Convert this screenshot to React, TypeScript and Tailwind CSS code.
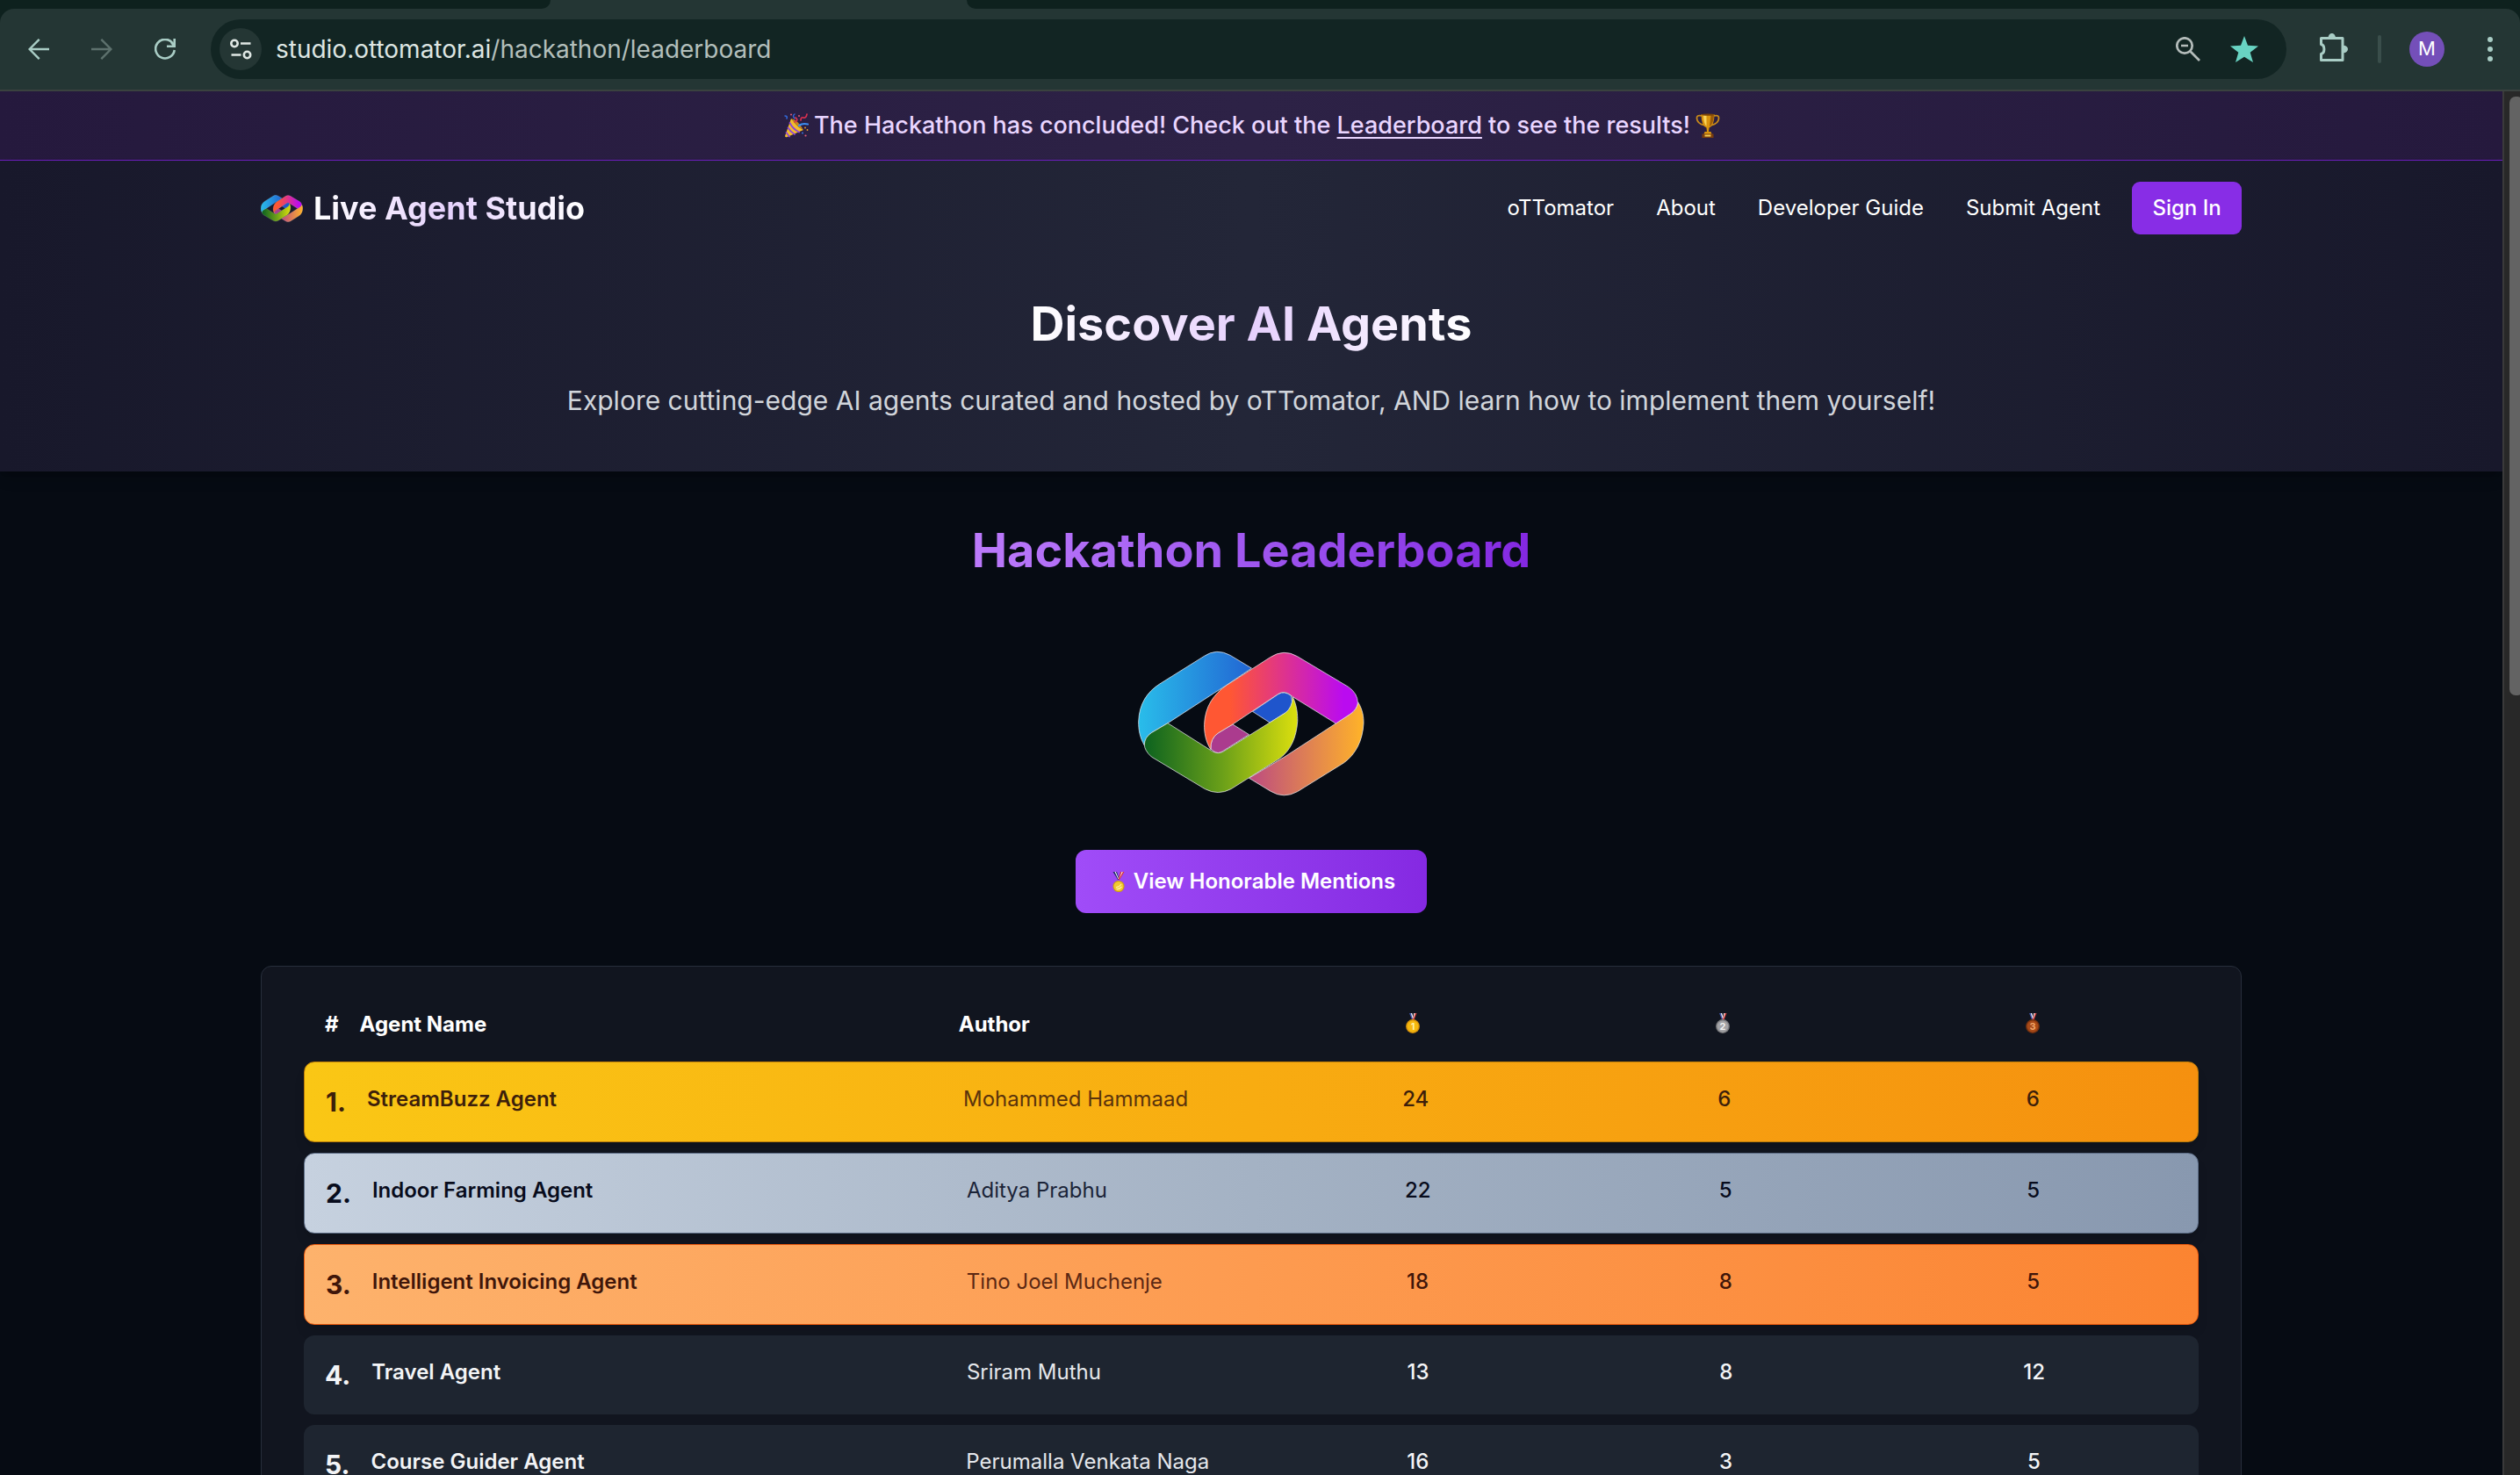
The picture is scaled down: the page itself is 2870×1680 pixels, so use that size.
import React, { useId } from "react";

function Logo({ className }: { className: string }) {
  const id = useId().replace(/[^a-zA-Z0-9]/g, "");
  const grad = (n: string) => `url(#${id}${n})`;
  return (
    <svg viewBox="76 64 775 498" className={className} stroke="#e5e7eb" strokeOpacity="0.75" strokeWidth="3" strokeLinejoin="round">
      <defs>
        <linearGradient id={`${id}b`} gradientUnits="userSpaceOnUse" x1="78" y1="0" x2="465" y2="0">
          <stop offset="0" stopColor="#29bdea" />
          <stop offset="1" stopColor="#2265d3" />
        </linearGradient>
        <linearGradient id={`${id}p`} gradientUnits="userSpaceOnUse" x1="390" y1="0" x2="780" y2="0">
          <stop offset="0" stopColor="#ff5733" />
          <stop offset="1" stopColor="#ba0bf0" />
        </linearGradient>
        <linearGradient id={`${id}y`} gradientUnits="userSpaceOnUse" x1="460" y1="0" x2="840" y2="0">
          <stop offset="0" stopColor="#bd4c80" />
          <stop offset="1" stopColor="#feb12a" />
        </linearGradient>
        <linearGradient id={`${id}g`} gradientUnits="userSpaceOnUse" x1="110" y1="0" x2="620" y2="0">
          <stop offset="0" stopColor="#10651f" />
          <stop offset="0.5" stopColor="#6ba019" />
          <stop offset="1" stopColor="#dbdf0e" />
        </linearGradient>
      </defs>
      <path fill={grad("b")} d="M98 388C82 360 78 335 78 307C80 245 108 205 150 178L302 83Q345 54 392 80L465 124L376 184L335 210L178 312L124 344Q100 360 98 388Z" />
      <path fill={grad("y")} d="M829 240C846 268 848 292 848 312C845 372 820 420 780 448L622 546Q575 572 530 545L456 500L578 427L753 313L802 281Q827 263 829 240Z" />
      <path fill="#ab3b8e" d="M325 400Q322 366 350 346L400 316L456 351L366 408Q350 419 335 408Z" />
      <path fill="#1f55cc" d="M468 272L556 213Q575 200 600 218L604 240Q602 262 580 277L527 310Z" />
      <path fill={grad("p")} d="M325 402C306 372 303 342 303 318C305 255 335 212 380 182L528 87Q575 56 622 84L796 188Q828 210 828 243Q825 265 802 281L753 313L606 222Q578 196 556 212L400 316L350 346Q323 364 325 402Z" />
      <path fill={grad("g")} d="M605 222C621 252 622 285 622 305C618 360 600 403 562 432L395 537Q350 561 305 537L122 427Q98 405 98 385Q99 360 122 345L178 312L330 408Q350 420 370 408L527 310L580 277Q605 258 605 222Z" />
    </svg>
  );
}

function Party({ className }: { className: string }) {
  return (
    <svg viewBox="0 0 28 28" className={className} fill="none" strokeLinecap="round">
      <path d="M8 6L1 26Q1.500 28 3.500 27L22 19Q17 17 13 12T8 6Z" fill="#f2bc2b" />
      <path d="M6.500 11Q10 18 17 21.500M4.500 16.500Q7 21 12 24M2.500 22L6 26.500" stroke="#8b45d8" strokeWidth="1.800" />
      <path d="M8 6Q15 7 22 19Q17 17 13 12T8 6Z" fill="#c9851c" />
      <path d="M1 3Q4 3 3 6M12 6Q9 3 12 1" stroke="#3268d8" strokeWidth="1.500" />
      <path d="M17 14Q21 11 27 12.500" stroke="#3b8cf0" strokeWidth="2.200" />
      <path d="M12 10Q17 8 13 5M19 8Q19 4 22 5T26 1" stroke="#d9304f" strokeWidth="1.700" />
      <g fill="#e05a78">
        <circle cx="8" cy="1.500" r="1" />
        <circle cx="17" cy="3" r="1" />
        <circle cx="24.500" cy="25.500" r="1.100" />
        <circle cx="26.500" cy="19" r="0.900" fill="#f0a030" />
        <circle cx="21" cy="22.500" r="0.900" fill="#3b7cf0" />
        <circle cx="24" cy="16.500" r="0.900" fill="#f0a030" />
      </g>
    </svg>
  );
}

function Trophy({ className }: { className: string }) {
  return (
    <svg viewBox="0 0 28 28" className={className} fill="none">
      <path d="M7 3Q1 1.500 1.500 6Q2 12 10 13.500M21 3Q27 1.500 26.500 6Q26 12 18 13.500" stroke="#c98a1a" strokeWidth="1.800" />
      <path d="M6.500 1H21.500Q21.500 14 15.500 16.500L15 21H13L12.500 16.500Q6.500 14 6.500 1Z" fill="#d9940f" />
      <path d="M9 2H12.500V15Q9 11 9 2Z" fill="#f8d35a" />
      <path d="M17.500 2H21Q20.500 12 16 15.500Z" fill="#9a5a08" />
      <ellipse cx="14" cy="1.600" rx="7.500" ry="1.200" fill="#7c4508" />
      <path d="M10.500 21H17.500L18.500 24H9.500Z" fill="#d9940f" />
      <path d="M7.500 23.500H20.500V28H7.500Z" fill="#7a3d0c" />
      <path d="M10.500 24.500H17.500V26.500H10.500Z" fill="#f5cf55" />
    </svg>
  );
}

function Medal({ rim, face, digit, n, className }: { rim: string; face: string; digit: string; n: number; className: string }) {
  return (
    <svg viewBox="0 0 16 23" className={className}>
      {n === 0 ? (
        <>
          <path d="M1.500 0H6L9 9H7Z" fill="#1d2a63" />
          <path d="M14.500 0H10L7.500 9H9Z" fill="#d8333a" />
          <path d="M3.500 0H4.800L8.200 8H7.300ZM11.500 0H12.800L8.700 8Z" fill="#f4f4f8" />
          <circle cx="8" cy="16.500" r="6.600" fill={rim} />
          <circle cx="8" cy="16.500" r="5.500" fill={face} />
          <path d="M5 17.500Q8 18 11 14M5.500 19.500Q9 20 11.500 17" stroke={digit} strokeWidth="1.200" fill="none" />
        </>
      ) : (
        <>
          <path d="M4 0H7L9 7.500H7Z" fill="#3d55a8" />
          <path d="M12.500 0H9.500L7.500 7.500H9.500Z" fill="#d8433f" />
          <path d="M5.800 0H7.200L8.800 5.500H7.600ZM9.200 0H10.600L8.800 6Z" fill="#f4f4f8" />
          <circle cx="8" cy="15" r="7.900" fill={rim} />
          <circle cx="8" cy="15" r="6.400" fill={face} />
          <text x="8" y="19" textAnchor="middle" fontSize="11" fontWeight="700" fontFamily="Inter, sans-serif" fill={digit}>
            {n}
          </text>
        </>
      )}
    </svg>
  );
}

function BrowserBar() {
  return (
    <div className="flex h-[104px] flex-col bg-[#0e211e]">
      <div className="flex h-[10px] shrink-0 pl-[627px]">
        <div className="-ml-3 h-[10px] w-3 bg-[#243634]">
          <div className="h-full w-full rounded-br-[10px] bg-[#0e211e]" />
        </div>
        <div className="h-[10px] w-[474px] bg-[#243634]" />
        <div className="h-[10px] w-3 bg-[#243634]">
          <div className="h-full w-full rounded-bl-[10px] bg-[#0e211e]" />
        </div>
      </div>
      <div className="flex h-[94px] items-center rounded-t-[16px] border-b-2 border-[#3a423f] bg-[#243634]">
        <svg viewBox="0 0 24 24" className="ml-8 size-6" fill="none" stroke="#a9cdc5" strokeWidth="2.400">
          <path d="M24 12H2M12.700 0.800L1.600 12L12.700 23.200" />
        </svg>
        <svg viewBox="0 0 24 24" className="ml-12 size-6" fill="none" stroke="#5d716d" strokeWidth="2.400">
          <path d="M0 12H22M11.300 0.800L22.400 12L11.300 23.200" />
        </svg>
        <svg viewBox="0 0 24 24" className="ml-12 size-6" fill="none" stroke="#a9cdc5" strokeWidth="2.600">
          <path d="M20.500 5A10.800 10.800 0 1 0 22.700 13M14 8.700H22.700V0M22.700 8.700L19 4" />
        </svg>
        <div className="ml-10 flex h-[68px] w-[2364px] items-center rounded-full bg-[#122523] pl-[10px]">
          <div className="flex size-12 items-center justify-center rounded-full bg-[#243634]">
            <svg viewBox="0 0 26 24" className="h-6 w-[26px]" fill="none" stroke="#dfe7e4" strokeWidth="2.600">
              <circle cx="6" cy="5.500" r="3.700" />
              <circle cx="20.500" cy="18.500" r="3.700" />
              <path d="M13 5.500H24.500M2.500 18.500H13.500" />
            </svg>
          </div>
          <div className="ml-4 w-[563px] whitespace-nowrap font-['Inter'] text-[28px] leading-[34px] tracking-[-0.010px] text-[#b3bfbb]">
            <span className="text-[#dde5e2]">studio.ottomator.ai</span>/hackathon/leaderboard
          </div>
          <svg viewBox="0 0 28 28" className="ml-auto mr-[34px] size-7" fill="none" stroke="#b4bcba" strokeWidth="2.700">
            <circle cx="10" cy="10" r="8.700" />
            <path d="M16.300 16.300L27 27M6 10H14" />
          </svg>
          <svg viewBox="0 0 32 30" className="mr-8 h-[30px] w-8" fill="#68d3c2">
            <path d="M16 0L20 10.800L32 11.400L22.700 18.800L26 30L16 23.700L6 30L9.300 18.800L0 11.400L12 10.800Z" />
          </svg>
        </div>
        <svg viewBox="0 0 33 32" className="-mt-1 ml-[37px] h-8 w-[33px]" fill="none" stroke="#a9cdc5" strokeWidth="3" strokeLinejoin="round">
          <path d="M2.500 5.500H27V30.500H2.500V23.500A4.200 5.600 0 0 0 2.500 12.500Z" />
          <path d="M10.500 5A4.200 5 0 0 1 19 5ZM28 13.800A5 4.200 0 0 1 28 22.200Z" fill="#a9cdc5" stroke="none" />
        </svg>
        <div className="ml-[34px] h-8 w-1 rounded-full bg-[#3a4e4b]" />
        <div className="ml-8 flex size-10 items-center justify-center rounded-full bg-[#744fb9] font-['Inter'] text-[22px] text-white">M</div>
        <div className="ml-[49px] flex flex-col gap-[5px]">
          <div className="size-1.5 rounded-full bg-[#a9cdc5]" />
          <div className="size-1.5 rounded-full bg-[#a9cdc5]" />
          <div className="size-1.5 rounded-full bg-[#a9cdc5]" />
        </div>
      </div>
    </div>
  );
}

const medals = [
  { n: 1, rim: "#d9940c", face: "#f6b80f", digit: "#fff0a8" },
  { n: 2, rim: "#7d7d80", face: "#a3a3a6", digit: "#f1f1f1" },
  { n: 3, rim: "#7a3310", face: "#a84a18", digit: "#f0a468" },
];

const rows = [
  {
    name: "StreamBuzz Agent",
    author: "Mohammed Hammaad",
    scores: [24, 6, 6],
    row: "h-[92px] border border-[#b97a08] bg-linear-to-r from-[#fac715] via-[#f8ac11] to-[#f5900f] text-[#3d1f0b] shadow-lg shadow-black/10",
    sub: "text-[#5a330c]",
  },
  {
    name: "Indoor Farming Agent",
    author: "Aditya Prabhu",
    scores: [22, 5, 5],
    row: "h-[92px] border border-[#5d6d86] bg-linear-to-r from-[#c6d1df] via-[#a4b2c4] to-[#8898af] text-[#080c1c] shadow-lg shadow-black/10",
    sub: "text-[#1b2438]",
  },
  {
    name: "Intelligent Invoicing Agent",
    author: "Tino Joel Muchenje",
    scores: [18, 8, 5],
    row: "h-[92px] border border-[#ea580c] bg-linear-to-r from-[#fdb26c] via-[#fd9b50] to-[#fb8431] text-[#3f160a] shadow-lg shadow-black/10",
    sub: "text-[#5b2813]",
  },
  {
    name: "Travel Agent",
    author: "Sriram Muthu",
    scores: [13, 8, 12],
    row: "h-[90px] bg-[#1e2530] text-[#f3f4f6]",
    sub: "text-[#e5e7eb]",
  },
  {
    name: "Course Guider Agent",
    author: "Perumalla Venkata Naga",
    scores: [16, 3, 5],
    row: "h-[90px] bg-[#1e2530] text-[#f3f4f6]",
    sub: "text-[#e5e7eb]",
  },
];

export default function App() {
  return (
    <div className="h-[1680px] w-[2870px] overflow-hidden bg-[#060b13] font-['Inter',sans-serif] text-2xl text-white">
      <BrowserBar />
      <div className="flex h-[1576px]">
        <div className="h-full w-[2850px] overflow-hidden">
          <div className="flex h-[79px] items-center justify-center border-b border-[#6c1fbd] bg-linear-to-r from-[#25193d] via-[#2d2246] to-[#25193d] pl-[2px] text-[27px] font-medium leading-[42px] text-[#e9d5ff]">
            <Party className="mr-[6px] size-7" />
            <span className="whitespace-nowrap">
              The Hackathon has concluded! Check out the{" "}
              <span className="underline decoration-2 underline-offset-[4px]">Leaderboard</span> to see the results!
            </span>
            <Trophy className="ml-[6px] size-7" />
          </div>

          <header className="h-[354px] bg-linear-to-r from-[#18182b] via-[#232638] to-[#18182b] px-[297px] pt-6 shadow-lg shadow-black/20">
            <nav className="flex h-[60px] items-center">
              <Logo className="h-[31px] w-12" />
              <div className="ml-3 bg-linear-to-r from-white via-[#e6d2fd] to-white bg-clip-text text-[36px] font-bold leading-[48px] text-transparent">
                Live Agent Studio
              </div>
              <div className="ml-auto flex items-center gap-12 leading-9">
                <span>oTTomator</span>
                <span>About</span>
                <span>Developer Guide</span>
                <span>Submit Agent</span>
                <button className="-ml-3 flex h-[60px] w-[125px] items-center justify-center rounded-[9px] bg-[#882de6] font-medium">Sign In</button>
              </div>
            </nav>
            <div className="mt-12 flex flex-col items-center pt-6">
              <h1 className="bg-linear-to-r from-white via-[#e6d0fd] to-white bg-clip-text pb-1 text-[54px] font-bold leading-[60px] text-transparent">
                Discover AI Agents
              </h1>
              <p className="mt-8 text-[30px] leading-[42px] text-[#d1d5db]">
                Explore cutting-edge AI agents curated and hosted by oTTomator, AND learn how to implement them yourself!
              </p>
            </div>
          </header>

          <main className="flex flex-col items-center px-[297px] pt-[60px]">
            <h2 className="bg-linear-to-r from-[#bc7afb] to-[#8427e2] bg-clip-text text-[54px] font-bold leading-[60px] text-transparent">Hackathon Leaderboard</h2>
            <Logo className="mt-[84px] h-[166px] w-[258px]" />
            <button className="mt-[61px] flex h-[72px] w-[400px] items-center justify-center rounded-[12px] bg-linear-to-r from-[#a04cf8] to-[#8529e2] pl-[5px] font-semibold">
              <Medal n={0} rim="#c89a1a" face="#f3c92e" digit="#fff3a0" className="mr-[9px] h-[23px] w-4" />
              <span>View Honorable Mentions</span>
            </button>

            <section className="mt-[60px] flex h-[700px] w-[2256px] shrink-0 flex-col gap-3 rounded-[12px] border border-[#272e3b] bg-[#11151f] p-12">
              <div className="mb-3 grid h-9 shrink-0 grid-cols-[auto_2fr_1fr_1fr_1fr_1fr] gap-6 px-6 font-bold leading-9">
                <span>#</span>
                <span>Agent Name</span>
                <span>Author</span>
                {medals.map((m) => (
                  <span key={m.n} className="flex h-9 items-center justify-center pb-1">
                    <Medal {...m} className="h-[23px] w-4" />
                  </span>
                ))}
              </div>
              {rows.map((r, i) => (
                <div key={r.name} className={`grid shrink-0 grid-cols-[auto_2fr_1fr_1fr_1fr_1fr] items-start gap-6 rounded-[12px] px-6 pt-6 leading-9 ${r.row}`}>
                  <span className="text-[30px] font-bold leading-[42px]">{i + 1}.</span>
                  <span className="font-semibold">{r.name}</span>
                  <span className={r.sub}>{r.author}</span>
                  {r.scores.map((s, j) => (
                    <span key={j} className="text-center font-medium">
                      {s}
                    </span>
                  ))}
                </div>
              ))}
            </section>
          </main>
        </div>
        <div className="h-full w-5 overflow-hidden border-l-2 border-[#3a3a3a] bg-[#282828] pl-[6px] pt-[6px]">
          <div className="h-[682px] w-4 rounded-[7px] bg-[#636363]" />
        </div>
      </div>
    </div>
  );
}
